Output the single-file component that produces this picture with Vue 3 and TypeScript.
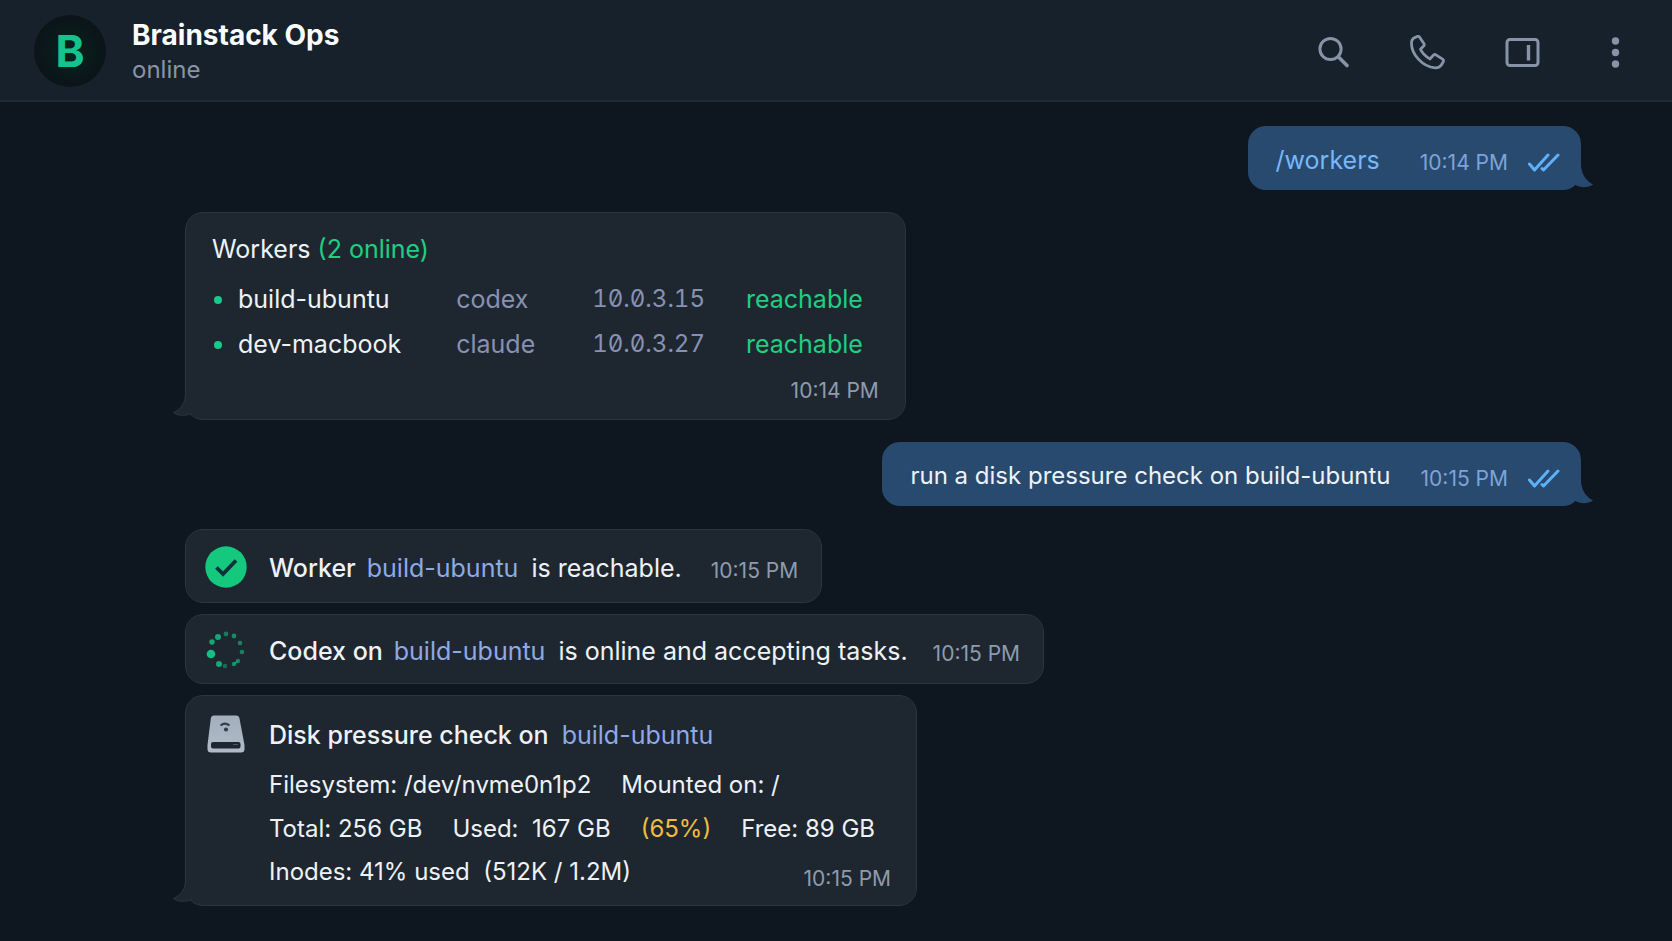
<script setup lang="ts">
interface Worker {
  name: string
  agent: string
  ip: string
  status: string
}

const workers: Worker[] = [
  { name: 'build-ubuntu', agent: 'codex', ip: '10.0.3.15', status: 'reachable' },
  { name: 'dev-macbook', agent: 'claude', ip: '10.0.3.27', status: 'reachable' },
]

// Spinner dots: position, radius and opacity around the ring
const dots: [number, number, number, number][] = [
  [21, 5, 2.4, 0.55],
  [29, 7, 2.4, 0.65],
  [35, 14, 2.3, 0.6],
  [37, 23, 2.3, 0.6],
  [33, 32, 2.2, 0.6],
  [29, 35, 2.3, 0.65],
  [20, 37, 2.3, 0.45],
  [14, 35, 3, 0.85],
  [6, 25, 4.3, 1],
  [7, 13, 2.7, 0.85],
  [13, 8, 3, 0.85],
]
</script>

<template>
  <div class="chat">
    <header class="bar">
      <div class="avatar" aria-hidden="true">B</div>
      <div class="who">
        <h1>Brainstack Ops</h1>
        <p>online</p>
      </div>
      <nav class="actions" aria-label="Chat actions">
        <button type="button" aria-label="Search">
          <svg width="36" height="36" viewBox="0 0 36 36" fill="none" stroke="currentColor" stroke-width="3">
            <circle cx="14.500" cy="14" r="10.600" />
            <path d="M22.500 22 31 30.500" stroke-width="3.600" stroke-linecap="round" />
          </svg>
        </button>
        <button type="button" aria-label="Call">
          <svg width="36" height="36" viewBox="0 0 37 37" fill="none" stroke="currentColor" stroke-width="2.900" stroke-linejoin="round">
            <path d="M3.200 3.700 7.300 1.500Q8.900 .9 9.900 2.400L14.400 9Q15 10.200 14 11.300L10.800 14.600Q12.800 19.700 20.400 24.600L24.300 20.600Q25.300 19.700 26.600 20.400L33.500 24.800Q34.900 25.900 34.200 27.400L31.900 31.300Q29.800 34 25.800 33.800C12.500 32.500 1.500 19.500 1.500 8.400Q1.500 5.300 3.200 3.700Z" />
          </svg>
        </button>
        <button type="button" aria-label="Toggle side panel">
          <svg width="36" height="36" viewBox="0 0 36 36" fill="none" stroke="currentColor" stroke-width="3">
            <rect x="3" y="4.500" width="31" height="26" rx="3" />
            <path d="M24.500 10V25.500" stroke-width="3.400" />
          </svg>
        </button>
        <button type="button" aria-label="More options">
          <svg width="36" height="36" viewBox="0 0 36 36" fill="currentColor">
            <circle cx="17.500" cy="6" r="3.700" />
            <circle cx="17.500" cy="17.500" r="3.700" />
            <circle cx="17.500" cy="29" r="3.700" />
          </svg>
        </button>
      </nav>
    </header>

    <main class="thread">
      <article class="bubble out">
        <p class="command">/workers</p>
        <time>10:14 PM</time>
        <svg class="ticks" width="32" height="20" viewBox="0 0 32 20" aria-label="Read">
          <path d="M1.500 11 6.500 17 20 2M15.500 17 30 2M14 15.500 15.500 17" />
        </svg>
        <svg class="tail" width="30" height="30" viewBox="0 0 30 30" aria-hidden="true">
          <path d="M5 4H17C17 13 21 20 29 24.500C24 28 16 28 11 24.500H5Z" />
        </svg>
      </article>

      <article class="bubble in report">
        <h2>Workers <span class="good">(2 online)</span></h2>
        <table aria-label="Workers">
          <tbody>
            <tr v-for="w in workers" :key="w.name">
              <th scope="row"><i class="dot"></i>{{ w.name }}</th>
              <td class="agent">{{ w.agent }}</td>
              <td class="ip">{{ w.ip }}</td>
              <td class="good">{{ w.status }}</td>
            </tr>
          </tbody>
        </table>
        <time>10:14 PM</time>
        <svg class="tail" width="30" height="30" viewBox="0 0 30 30" aria-hidden="true">
          <path class="fill" d="M24 4H13.500C13.500 13 9 19 1.500 22.500C5 26 14 26 19.500 23.500L24 25Z" />
          <path class="edge" d="M13.500 4C13.500 13 9 19 1.500 22.500C5 26 14 26 19.500 23.500" />
        </svg>
      </article>

      <article class="bubble out">
        <p>run a disk pressure check on build-ubuntu</p>
        <time>10:15 PM</time>
        <svg class="ticks" width="32" height="20" viewBox="0 0 32 20" aria-label="Read">
          <path d="M1.500 11 6.500 17 20 2M15.500 17 30 2M14 15.500 15.500 17" />
        </svg>
        <svg class="tail" width="30" height="30" viewBox="0 0 30 30" aria-hidden="true">
          <path d="M5 4H17C17 13 21 20 29 24.500C24 28 16 28 11 24.500H5Z" />
        </svg>
      </article>

      <div class="group">
        <article class="bubble in status tall">
          <svg width="42" height="42" viewBox="0 0 42 42" fill="none" aria-hidden="true">
            <circle cx="21" cy="21" r="20.700" fill="#14c97e" />
            <path d="M11.500 21.500 18 28 31 14.500" stroke="#12303a" stroke-width="3.800" />
          </svg>
          <p><b>Worker</b><span class="host">build-ubuntu</span><span>is reachable.</span></p>
          <time>10:15 PM</time>
        </article>

        <article class="bubble in status">
          <svg width="42" height="42" viewBox="0 0 42 42" fill="#17bd83" aria-hidden="true">
            <circle v-for="(d, i) in dots" :key="i" :cx="d[0]" :cy="d[1]" :r="d[2]" :opacity="d[3]" />
            <path d="M29 35 33 32" stroke="#17bd83" stroke-width="2" opacity=".5" />
          </svg>
          <p><b>Codex on</b><span class="host">build-ubuntu</span><span>is online and accepting tasks.</span></p>
          <time>10:15 PM</time>
        </article>

        <article class="bubble in disk">
          <svg width="42" height="42" viewBox="0 0 42 42" aria-hidden="true">
            <defs>
              <linearGradient id="metal" x1="0" y1="0" x2="0" y2="1">
                <stop offset="0" stop-color="#a3afbc" />
                <stop offset="1" stop-color="#b0bac8" />
              </linearGradient>
            </defs>
            <path d="M9 2.500H31Q34 2.500 34.500 5.500L39.500 32V36Q39.500 39.500 36 39.500H6Q2.500 39.500 2.500 36V32L5.800 5.500Q6.300 2.500 9 2.500Z" fill="url(#metal)" />
            <rect x="6" y="29" width="29.500" height="6.500" rx="2" fill="#1c2630" />
            <path d="M28 31.500H33" stroke="#4c5965" />
            <path d="M15.500 12.500Q20 8.800 24.500 12.500" fill="none" stroke="#33404c" stroke-width="2.200" />
            <circle cx="21" cy="16.500" r="2.100" fill="#33404c" />
          </svg>
          <div class="details">
            <h2><b>Disk pressure check on</b><span class="host">build-ubuntu</span></h2>
            <p><span>Filesystem: /dev/nvme0n1p2</span><span>Mounted on: /</span></p>
            <p>
              <span>Total: 256 GB</span><span>Used:&nbsp; 167 GB</span><span class="warn">(65%)</span><span>Free: 89 GB</span>
            </p>
            <p class="last"><span>Inodes: 41% used&nbsp; (512K / 1.2M)</span><time>10:15 PM</time></p>
          </div>
          <svg class="tail" width="30" height="30" viewBox="0 0 30 30" aria-hidden="true">
            <path class="fill" d="M24 4H13.500C13.500 13 9 19 1.500 22.500C5 26 14 26 19.500 23.500L24 25Z" />
            <path class="edge" d="M13.500 4C13.500 13 9 19 1.500 22.500C5 26 14 26 19.500 23.500" />
          </svg>
        </article>
      </div>
    </main>
  </div>
</template>

<style>
body {
  margin: 0;
  background: #0e161f;
}
</style>

<style scoped>
.chat {
  min-height: 100vh;
  display: flex;
  flex-direction: column;
  box-sizing: border-box;
  background: #0e161f;
  color: #eef2f6;
  font-family: Inter, "Liberation Sans", sans-serif;
  font-size: 24px;
  line-height: 32px;
}
h1,
h2,
p {
  margin: 0;
  font-size: inherit;
  font-weight: 400;
}
b,
.host,
.command,
.report,
.status {
  font-size: 25px;
}
b {
  font-weight: 500;
}
.bar {
  display: flex;
  align-items: center;
  height: 98px;
  padding: 2px 38px 0 34px;
  background: #17212c;
  border-bottom: 2px solid #212c36;
}
.avatar {
  width: 72px;
  height: 72px;
  border-radius: 50%;
  background: radial-gradient(circle, #05251f 0%, #0a191a 45%, #0c1318 75%);
  color: #14c38e;
  font-size: 44px;
  font-weight: 700;
  line-height: 72px;
  text-align: center;
}
.who {
  margin-left: 26px;
  padding-top: 2px;
}
.who h1 {
  font-size: 28px;
  font-weight: 700;
  line-height: 36px;
  color: #fbfcfe;
}
.who p {
  color: #8994a5;
  line-height: 34px;
}
.actions {
  display: flex;
  gap: 58px;
  margin-left: auto;
  padding-top: 4px;
}
button {
  display: block;
  padding: 0;
  border: 0;
  background: none;
  color: #8793a6;
  cursor: pointer;
}
svg {
  display: block;
  flex: none;
}
.thread {
  display: flex;
  flex-direction: column;
  align-items: flex-start;
  gap: 22px;
  padding: 24px 91px 35px 185px;
}
.group {
  display: flex;
  flex-direction: column;
  align-items: flex-start;
  gap: 11px;
  margin-top: 1px;
}
.bubble {
  position: relative;
  box-sizing: border-box;
  border-radius: 18px;
}
time {
  color: #8f9bad;
  font-size: 21px;
  line-height: 28px;
  white-space: nowrap;
}
.out {
  align-self: flex-end;
  display: flex;
  align-items: center;
  padding: 18px 21px 14px 28px;
  background: #284a6f;
}
.out time {
  margin: 6px 0 0 30px;
  line-height: 26px;
  color: #7fa3d6;
}
.command {
  margin-right: 10px;
  color: #77b7fa;
}
.ticks {
  margin: 6px 0 0 20px;
  fill: none;
  stroke: #5fb0f8;
  stroke-width: 3;
  stroke-linecap: round;
  stroke-linejoin: round;
}
.in {
  background: #1e2730;
  border: 1px solid #2a353e;
}
.tail {
  position: absolute;
  bottom: 0;
}
.out .tail {
  right: -13px;
  fill: #284a6f;
}
.in .tail {
  left: -14px;
  bottom: -1px;
}
.in .fill {
  fill: #1e2730;
}
.in .edge {
  fill: none;
  stroke: #2a353e;
}
.report {
  padding: 20px 26px 14px 26px;
}
.good {
  color: #1fcf81;
}
table {
  margin-top: 11px;
  border-collapse: collapse;
}
th,
td {
  height: 45px;
  padding: 0 41px 0 0;
  font-weight: 400;
  text-align: left;
}
th {
  padding-right: 55px;
}
td:last-child {
  padding-right: 16px;
}
.dot {
  display: inline-block;
  width: 8px;
  height: 8px;
  margin: 0 16px 4px 2px;
  border-radius: 50%;
  background: #17c98a;
}
.agent {
  padding-right: 57px;
}
.agent,
.ip {
  color: #8791b4;
}
.ip {
  font-size: 24px;
  font-variant-numeric: slashed-zero tabular-nums;
}
.report time {
  display: block;
  margin-top: 11px;
  text-align: right;
}
.status {
  display: flex;
  align-items: center;
  min-height: 70px;
  padding: 2px 23px 0 19px;
}
.status.tall {
  min-height: 74px;
}
.status p {
  display: flex;
  align-items: baseline;
  gap: 11px;
  margin: 2px 0 0 22px;
}
.status .host {
  margin-right: 2px;
}
.status time {
  margin: 8px 0 0 25px;
}
.tall time {
  margin-left: 29px;
}
.host {
  color: #8ea9e6;
}
.disk {
  display: flex;
  align-items: flex-start;
  gap: 22px;
  padding: 17px 25px 12px 19px;
}
.details h2 {
  display: flex;
  gap: 13px;
  margin: 6px 0 12px;
}
.details p {
  display: flex;
  gap: 30px;
  padding-right: 16px;
  line-height: 44px;
}
.details .last {
  justify-content: space-between;
  padding-right: 0;
  line-height: 42px;
}
.last time {
  align-self: flex-end;
}
.warn {
  color: #f2bd3d;
}
</style>
